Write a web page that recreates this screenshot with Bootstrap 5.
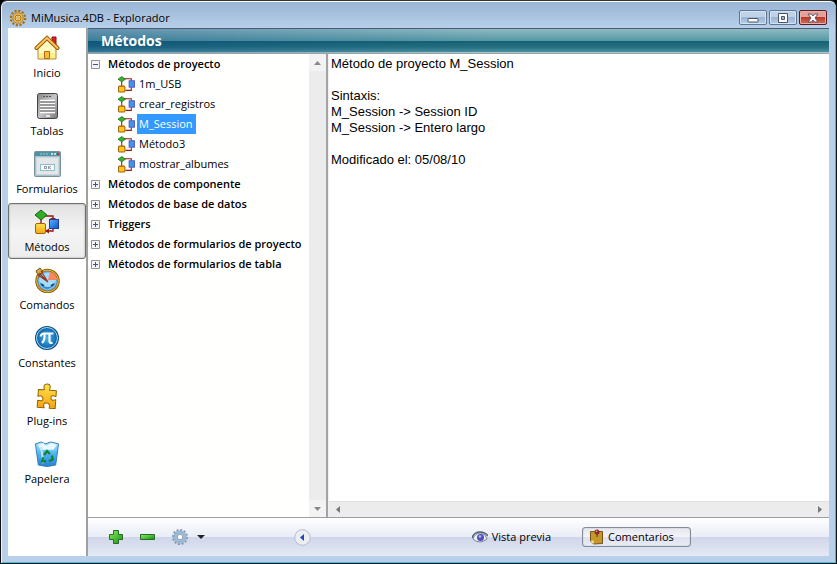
<!DOCTYPE html>
<html lang="es">
<head>
<meta charset="utf-8">
<meta name="viewport" content="width=device-width, initial-scale=1">
<title>MiMusica.4DB - Explorador</title>
<link rel="stylesheet" href="https://cdn.jsdelivr.net/npm/bootstrap@5.3.0/dist/css/bootstrap.min.css">
<style>
body{font:11px/16px "Open Sans","Noto Sans",sans-serif;color:#000;background:#000}
button{font:inherit;color:inherit;background:none;border:0;padding:0}
svg{display:block;flex:none}
.win{border:1px solid #111;border-top-color:#333;border-radius:7px 7px 0 0;background:linear-gradient(#98b4d3,#b8d0ea 28px);box-shadow:inset 0 1px #fff,inset 1px 0 #e9f3fb,inset -1px 0 #30c4e6,inset 0 -1px #30c4e6;padding:0 7px 7px}
.titlebar{height:27px;padding:6px 2px 0 1px}
.caption-btn{width:28px;height:15px;border:1px solid #5f7592;border-radius:2px;box-shadow:inset 0 0 0 1px #d5e4f4;background:linear-gradient(#bfd2e8 50%,#9ab6d4 50%,#b6cee8);display:flex;align-items:center;justify-content:center}
.caption-close{border-color:#5b1724;box-shadow:inset 0 0 0 1px #eab0a8;background:linear-gradient(#e3a198 50%,#b93a28 50%,#d0705a)}
.caption-controls{gap:2px;padding-top:3px}
.side{width:80px;flex:none;border-right:2px solid #a0a0a0;padding-top:1px}
.side-btn{height:56px;margin-bottom:2px;border:1px solid transparent;border-radius:3px;width:100%;padding-top:5px;gap:4px}
.side-btn.active{border:1px solid #707070;box-shadow:inset 0 0 2px #999;background:linear-gradient(#e2e2e2,#f4f4f4 50%,#ededed)}
.side-label{font-size:11px}
.heading{height:26px;border-top:1px solid #4f5a72;border-bottom:1px solid #a0a0a0;color:#fff;font-size:14px;font-weight:700;line-height:24px;padding-left:13px;margin:0;background:linear-gradient(90deg,rgba(0,60,130,.3),rgba(0,60,130,0) 55%),linear-gradient(#8fbac4,#5498a3 12px,#156173 12px,#256f80 18px,#4a929f 23px,#fff 24px)}
.tree-pane{width:240px;flex:none;background:#fffffd;border-right:2px solid #a3a3a6}
.tree{line-height:20px;margin:0;padding:0 0 0 3px;list-style:none}
.tree ul{list-style:none;margin:0;padding:0 0 0 27px}
.branch{height:20px;font-weight:600;gap:8px;white-space:nowrap}
.leaf{height:20px;gap:2px;white-space:nowrap}
.leaf-name{padding:0 3px 0 2px}
.leaf.active .leaf-name{background:#3399ff;color:#fff}
.vbar{width:17px;background:#ececec;flex:none}
.arrow-box{height:17px;background:#f3f3f3}
.hbar{height:16px;background:#ececec;border-top:1px solid #e0e0e0;flex:none;padding:0 7px}
.notes{font:13px/16px "Liberation Sans",Arial,sans-serif;color:#000;border:0;resize:none;padding:2px;overflow:hidden;outline:0;background:#fff;display:block}
.notes-pane{border-left:1px solid #f0f0f0}
.tools{height:39px;border-top:1px solid #9a9da6;background:linear-gradient(#fff,#e9ecf6 19px,#cfd6e9 19px,#e5e9f5);padding:0 0 0 20px}
.tool-group{width:182px;flex:none}
.comments-btn{width:109px;height:20px;border:1px solid #858b98;border-radius:3px;box-shadow:inset 0 0 1px #888;background:linear-gradient(#e5e7ee,#f3f4fa 50%,#dce0ef 50%,#e9ecf6);padding-left:6px}
.mode-row{padding-right:138px;gap:31px}
</style>
</head>
<body>
<svg class="position-absolute" width="0" height="0" aria-hidden="true">
<defs>
<linearGradient id="yellow" x2="0" y2="1"><stop stop-color="#ffe44d"/><stop offset="1" stop-color="#f3a512"/></linearGradient>
<linearGradient id="blue" x2="1" y2="1"><stop stop-color="#5db3ff"/><stop offset="1" stop-color="#0751cf"/></linearGradient>
<linearGradient id="green" x2="1" y2="1"><stop stop-color="#8cf060"/><stop offset="1" stop-color="#129012"/></linearGradient>
<linearGradient id="metal" x2="1" y2="1"><stop stop-color="#888"/><stop offset=".5" stop-color="#c5c5c9"/><stop offset="1" stop-color="#77777c"/></linearGradient>
<linearGradient id="bin" x2="0" y2="1"><stop stop-color="#b8e8ff"/><stop offset=".5" stop-color="#4bb3f0"/><stop offset="1" stop-color="#2a7fd4"/></linearGradient>
<radialGradient id="orb"><stop stop-color="#48b7ec"/><stop offset="1" stop-color="#0d63ac"/></radialGradient>
<symbol id="flow" viewBox="0 0 26 26"><path d="M8 7h11v5M7 9v9M19 17v5H11" fill="none" stroke="#9c1616" stroke-width="1.4"/><path d="M16 9h6l-3 3zM15 19.500v5l-4-2.500z" fill="#9c1616"/><path d="M7 1l6 5-6 5-6-5z" fill="#2fae25" stroke="#13640c"/><rect x="15.500" y="10.500" width="9" height="9" fill="url(#blue)" stroke="#17439e"/><rect x="1.500" y="14.500" width="10" height="10" rx="1.500" fill="url(#yellow)" stroke="#a66208"/></symbol>
<symbol id="flow-mini" viewBox="0 0 16 16"><path d="M5 2.500h7.500v4M3.500 5v6M12.500 10v3.500H7" fill="none" stroke="#9c1616"/><path d="M3.500.500L7 3 3.500 5.500 0 3z" fill="#35b32b" stroke="#1b6b16" stroke-width=".7"/><rect x="10.500" y="4.500" width="5" height="6" fill="#3f95e7" stroke="#5462c6"/><rect x=".500" y="9.500" width="6" height="5.500" rx="1" fill="#ffc81c" stroke="#a66208"/></symbol>
<symbol id="plus-box" viewBox="0 0 9 9"><path d="M.5.500h8v8h-8z" fill="#f4f4f4" stroke="#929292"/><path d="M2 4.500h5M4.500 2v5" stroke="#3b519b"/></symbol>
<symbol id="minus-box" viewBox="0 0 9 9"><path d="M.5.500h8v8h-8z" fill="#f4f4f4" stroke="#929292"/><path d="M2 4.500h5" stroke="#3b519b"/></symbol>
</defs>
</svg>
<div class="win vh-100 d-flex flex-column">
<header class="titlebar d-flex justify-content-between flex-shrink-0">
<div class="d-flex gap-1 align-items-center">
<svg width="18" height="18" viewBox="0 0 18 18"><circle cx="9" cy="9" r="7.200" fill="none" stroke="#ab6d0b" stroke-width="2.200" stroke-dasharray="2.200 1.570"/><circle cx="9" cy="9" r="5.200" fill="#eec45b" stroke="#b97d18"/><circle cx="9" cy="9" r="3" fill="#e8d9ac" stroke="#a66d10"/><circle cx="9" cy="9" r="1.200" fill="#fff6c9" stroke="#d19427"/></svg>
<span>MiMusica.4DB - Explorador</span>
</div>
<div class="caption-controls d-flex">
<button class="caption-btn" aria-label="Minimizar"><svg width="12" height="10" viewBox="0 0 12 10"><rect x="1" y="5.500" width="10" height="3.500" rx=".5" fill="#fff" stroke="#4a5468"/></svg></button>
<button class="caption-btn" aria-label="Maximizar"><svg width="12" height="10" viewBox="0 0 12 10"><path d="M1.500.500h9v9h-9zM4.500 3.500v3h3v-3z" fill="#fff" fill-rule="evenodd" stroke="#4a5468"/></svg></button>
<button class="caption-btn caption-close" aria-label="Cerrar"><svg width="12" height="10" viewBox="0 0 12 10"><path d="M1 1h3.500L6 3l1.500-2H11L8 5l3 4H7.500L6 7 4.500 9H1l3-4z" fill="#fff" stroke="#5d5264"/></svg></button>
</div>
</header>
<div class="d-flex flex-grow-1 bg-white overflow-hidden">
<nav class="side d-flex flex-column" aria-label="Secciones">
<button class="side-btn d-flex flex-column align-items-center"><svg width="26" height="26" viewBox="0 0 26 26"><path d="M18 2h4v9h-4z" fill="#e02020" stroke="#851313"/><path d="M4 12L13 4l9 8v12H4z" fill="#fffac0" stroke="#b78125"/><path d="M5 18h16v5H5z" fill="#ffef88"/><path d="M10.500 16.500h5v7h-5z" fill="#fdb83b" stroke="#ad6b13"/><path d="M2.500 13L13 3l10.500 10" fill="none" stroke="#945a10" stroke-width="4" stroke-linecap="round"/><path d="M2.500 13L13 3l10.500 10" fill="none" stroke="#ffc457" stroke-width="2" stroke-linecap="round"/></svg><span class="side-label">Inicio</span></button>
<button class="side-btn d-flex flex-column align-items-center"><svg width="26" height="26" viewBox="0 0 26 26"><rect x="3.500" y=".5" width="20" height="25" rx="2" fill="url(#metal)" stroke="#424247"/><path d="M9 3.500h9" stroke="#555" stroke-dasharray="2 1"/><path d="M6 7h15v13H6z" fill="#77787b"/><path d="M6 7.500h15M6 10.500h15M6 13.500h15M6 16.500h15M6 19.500h15" stroke="#fff" stroke-width="1.500"/><path d="M12 23h4" stroke="#fff" stroke-width="1.500"/></svg><span class="side-label">Tablas</span></button>
<button class="side-btn d-flex flex-column align-items-center"><svg width="27" height="26" viewBox="0 0 27 26"><rect x=".5" y=".5" width="26" height="25" rx="1" fill="#aac0c8" stroke="#78929c"/><path d="M1 1h25v4H1z" fill="#4b93a5"/><path d="M6 3h9" stroke="#98c7d2" stroke-dasharray="2 1"/><path d="M17 2h2v2h-2zM20 2h2v2h-2z" fill="#c6dce1"/><path d="M23 2h2v2h-2z" fill="#d62b1d"/><path d="M2.500 6.500h22v17h-22z" fill="#e3e7e8" stroke="#ccd8dc"/><rect x="6.500" y="13.500" width="14" height="6" fill="#f8fafb" stroke="#8dbccc"/><path d="M10.500 15.500h2v2h-2zM14.500 15v3M17 15l-2 1.500 2 1.500" fill="none" stroke="#718087" stroke-width=".8"/></svg><span class="side-label">Formularios</span></button>
<button class="side-btn active d-flex flex-column align-items-center" aria-pressed="true"><svg width="28" height="26" viewBox="-1 0 28 26"><use href="#flow" width="26" height="26"/></svg><span class="side-label">Métodos</span></button>
<button class="side-btn d-flex flex-column align-items-center"><svg width="26" height="26" viewBox="0 0 26 26"><circle cx="13.500" cy="14" r="11" fill="#5dafe9" stroke="#99640f" stroke-width="2.600"/><circle cx="13.500" cy="14" r="10.800" fill="none" stroke="#e8bd42"/><circle cx="13.500" cy="14" r="8.500" fill="#a5dcfb"/><path d="M14 13l2-8a9 9 0 0 1 7 8z" fill="#ff835f"/><path d="M5 14q3 8 8 8 6 0 9-8l-4 5q-4 2-9 0z" fill="#3688d1"/><path d="M7 17l3 2M20 17l-3 2" stroke="#134b83" stroke-width="2"/><path d="M2 4l4-3 3 4-5 3z" fill="#dda941" stroke="#765018"/><path d="M5 6l9 9M4 8l10 7M7 4l7 11" stroke="#8f3926" stroke-width="1.100"/></svg><span class="side-label">Comandos</span></button>
<button class="side-btn d-flex flex-column align-items-center"><svg width="26" height="26" viewBox="0 0 26 26"><circle cx="13" cy="13" r="12" fill="#0c4b7e"/><circle cx="13" cy="13" r="10.500" fill="url(#orb)" stroke="#a8dcf3"/><path d="M6.500 11.500q1-3 3.500-3h9.500M10.500 9q.5 6-2.500 9M15.500 9v7q0 3 3 1.500" fill="none" stroke="#fff" stroke-width="2.200"/></svg><span class="side-label">Constantes</span></button>
<button class="side-btn d-flex flex-column align-items-center"><svg width="26" height="26" viewBox="0 0 26 26"><path d="M4 7h6q-2-6 2.500-6T15 7h7v6q-5-2-5 1.500t5 1.500v9h-6q1-5-3-5t-2 5H4v-7q6 1 5-2.500T4 14z" transform="rotate(4 13 13)" fill="url(#yellow)" stroke="#996000" stroke-linejoin="round"/></svg><span class="side-label">Plug-ins</span></button>
<button class="side-btn d-flex flex-column align-items-center"><svg width="26" height="26" viewBox="0 0 26 27"><path d="M1 3l6-2 4 2 6-2 8 2-3 22q-9 3-18 0z" fill="url(#bin)" stroke="#317db8"/><path d="M4 4l5-2 3 3 6-3 5 2-3 5H6z" fill="#e9f9ff"/><path d="M7 6l2 17" stroke="#b9e7ff" stroke-width="2"/><path d="M10 14.500l3-4 3 3M18 15l1 4-4 2M12 21H8l1-4" fill="none" stroke="#11852d" stroke-width="2.400"/></svg><span class="side-label">Papelera</span></button>
</nav>
<main class="d-flex flex-column flex-grow-1 overflow-hidden">
<h1 class="heading flex-shrink-0">Métodos</h1>
<div class="d-flex flex-grow-1 overflow-hidden">
<section class="tree-pane d-flex">
<ul class="tree flex-grow-1">
<li><button class="branch d-flex align-items-center" aria-expanded="true"><svg width="9" height="9"><use href="#minus-box"/></svg>Métodos de proyecto</button>
<ul>
<li><button class="leaf d-flex align-items-center"><svg width="17" height="17"><use href="#flow-mini"/></svg><span class="leaf-name">1m_USB</span></button></li>
<li><button class="leaf d-flex align-items-center"><svg width="17" height="17"><use href="#flow-mini"/></svg><span class="leaf-name">crear_registros</span></button></li>
<li><button class="leaf active d-flex align-items-center"><svg width="17" height="17"><use href="#flow-mini"/></svg><span class="leaf-name">M_Session</span></button></li>
<li><button class="leaf d-flex align-items-center"><svg width="17" height="17"><use href="#flow-mini"/></svg><span class="leaf-name">Método3</span></button></li>
<li><button class="leaf d-flex align-items-center"><svg width="17" height="17"><use href="#flow-mini"/></svg><span class="leaf-name">mostrar_albumes</span></button></li>
</ul></li>
<li><button class="branch d-flex align-items-center" aria-expanded="false"><svg width="9" height="9"><use href="#plus-box"/></svg>Métodos de componente</button></li>
<li><button class="branch d-flex align-items-center" aria-expanded="false"><svg width="9" height="9"><use href="#plus-box"/></svg>Métodos de base de datos</button></li>
<li><button class="branch d-flex align-items-center" aria-expanded="false"><svg width="9" height="9"><use href="#plus-box"/></svg>Triggers</button></li>
<li><button class="branch d-flex align-items-center" aria-expanded="false"><svg width="9" height="9"><use href="#plus-box"/></svg>Métodos de formularios de proyecto</button></li>
<li><button class="branch d-flex align-items-center" aria-expanded="false"><svg width="9" height="9"><use href="#plus-box"/></svg>Métodos de formularios de tabla</button></li>
</ul>
<div class="vbar d-flex flex-column justify-content-between">
<button class="arrow-box d-flex align-items-center justify-content-center" aria-label="Subir"><svg width="7" height="4"><path d="M0 4l3.500-4L7 4z" fill="#888"/></svg></button>
<button class="arrow-box d-flex align-items-center justify-content-center" aria-label="Bajar"><svg width="7" height="4"><path d="M0 0l3.500 4L7 0z" fill="#888"/></svg></button>
</div>
</section>
<section class="notes-pane d-flex flex-column flex-grow-1">
<textarea class="notes w-100 flex-grow-1" aria-label="Comentarios del método" spellcheck="false">Método de proyecto M_Session

Sintaxis:
M_Session -> Session ID
M_Session -> Entero largo

Modificado el: 05/08/10</textarea>
<div class="hbar d-flex justify-content-between align-items-center">
<button aria-label="Izquierda"><svg width="4" height="7"><path d="M4 0L0 3.500 4 7z" fill="#777"/></svg></button>
<button aria-label="Derecha"><svg width="4" height="7"><path d="M0 0l4 3.500L0 7z" fill="#777"/></svg></button>
</div>
</section>
</div>
<footer class="tools d-flex align-items-center flex-shrink-0">
<div class="tool-group d-flex align-items-center">
<button class="me-3" aria-label="Añadir"><svg width="16" height="16" viewBox="0 0 16 16"><path d="M5.500 1.500h5v4h4v5h-4v4h-5v-4h-4v-5h4z" fill="url(#green)" stroke="#286a2c"/></svg></button>
<button class="me-3" aria-label="Eliminar"><svg width="15" height="8" viewBox="0 0 15 8"><path d="M.5 1.500h14v5H.5z" fill="url(#green)" stroke="#286a2c"/></svg></button>
<button class="d-flex align-items-center gap-2" aria-label="Opciones"><svg width="18" height="18" viewBox="0 0 18 18"><circle cx="9" cy="9" r="7" fill="none" stroke="#8193a9" stroke-width="2" stroke-dasharray="2 1.660"/><circle cx="9" cy="9" r="5" fill="#f4f6fb" stroke="#9ab7d5" stroke-width="3.500"/><circle cx="9" cy="9" r="2.800" fill="#fff" stroke="#7e99b5"/></svg><svg width="8" height="4"><path d="M0 0h8L4 4z" fill="#222"/></svg></button>
</div>
<button class="ms-1" aria-label="Contraer panel"><svg width="17" height="17" viewBox="0 0 17 17"><circle cx="8.500" cy="8.500" r="7.800" fill="#eceef0" stroke="#b2bad7"/><path d="M10 5v7L6 8.500z" fill="#2248bd"/></svg></button>
<div class="mode-row d-flex align-items-center ms-auto">
<button class="d-flex align-items-center gap-1"><svg width="16" height="12" viewBox="0 0 16 12"><path d="M1 8Q3 2 9 2q5 1 6 6-4 3-7 3-4 0-7-3z" fill="#eef1f6" stroke="#778599"/><path d="M0 7Q2 1 8 1q5 0 8 4" fill="none" stroke="#4d6275" stroke-width="1.500"/><circle cx="8.500" cy="6.500" r="3.500" fill="#514eb9"/><circle cx="8" cy="5.500" r="1.300" fill="#bdbcf1"/></svg>Vista previa</button>
<button class="comments-btn d-flex align-items-center gap-1" aria-pressed="true"><svg width="15" height="16" viewBox="0 0 15 16"><path d="M1.500 2.500h12v12l-9 .500-3-3z" fill="#c6982c" stroke="#765316"/><path d="M1.500 12l3-.500v3.500z" fill="#fff0a0"/><path d="M8 5v3" stroke="#4e2020"/><circle cx="8" cy="3" r="2.500" fill="#8c2a29"/><circle cx="7.500" cy="2.300" r=".8" fill="#ecaaa6"/></svg>Comentarios</button>
</div>
</footer>
</main>
</div>
</div>
<script src="https://cdn.jsdelivr.net/npm/bootstrap@5.3.0/dist/js/bootstrap.bundle.min.js"></script>
</body>
</html>
